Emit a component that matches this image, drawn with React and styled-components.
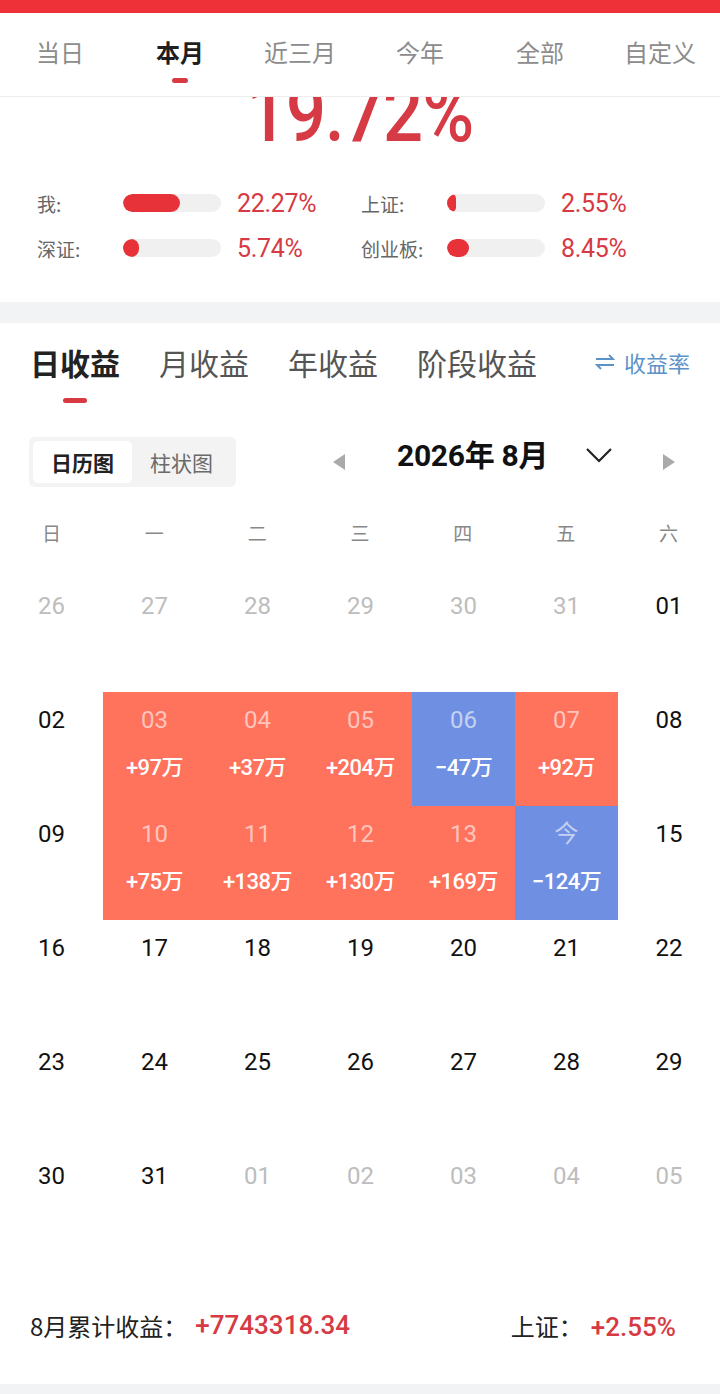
import styled, {createGlobalStyle} from "styled-components";

const colors = {
    red: '#ee3039',
    text: '#d63a44',
    dark: '#1f1f1f',
    grey: '#8a8a8a',
    light: '#bdbdbd',
    cellRed: '#ff725c',
    cellBlue: '#6f90e2',
    band: '#f2f3f5',
    link: '#5b93c9',
}

const GlobalStyle = createGlobalStyle`
  body {
    margin: 0;
    background: #fff;
    font-family: "Noto Sans CJK SC", "Noto Sans", sans-serif;
  }
`

const Page = styled.div`
  width: 720px;
  height: 1394px;
  overflow: hidden;
  background: #fff;
`
const TopBar = styled.div`
  height: 13px;
  background: ${colors.red};
`
const Header = styled.div`
  position: relative;
  z-index: 2;
  display: grid;
  grid-template-columns: repeat(6, 1fr);
  height: 83px;
  background: #fff;
  border-bottom: 1px solid #ececec;
`
const HeaderTab = styled.div`
  display: flex;
  flex-direction: column;
  align-items: center;
  padding-top: 23px;
  font-size: 24px;
  line-height: 32px;
  color: ${p => p.$active ? colors.dark : '#8c8c8c'};
  font-weight: ${p => p.$active ? 700 : 400};
`
const TabLine = styled.div`
  width: ${p => p.$w || 16}px;
  height: 5px;
  border-radius: 3px;
  background: ${p => p.$on ? '#d83a42' : 'transparent'};
  margin-top: ${p => p.$mt || 10}px;
`
const Summary = styled.div`
  height: 205px;
  overflow: hidden;
`
const BigNumber = styled.div`
  margin-top: -34px;
  text-align: center;
  font-family: Roboto, sans-serif;
  font-size: 82px;
  line-height: 100px;
  letter-spacing: -1px;
  color: ${colors.text};
  font-weight: 500;
  transform: scaleX(0.86);
`
const Stats = styled.div`
  display: grid;
  grid-template-columns: 324px 1fr;
  row-gap: 17px;
  padding: 26px 0 0 37px;
`
const Stat = styled.div`
  display: flex;
  align-items: center;
  height: 28px;
`
const StatLabel = styled.div`
  width: 86px;
  font-size: 19px;
  color: #666;
`
const Track = styled.div`
  width: 98px;
  height: 18px;
  border-radius: 9px;
  background: #f0f0f0;
  overflow: hidden;
`
const Fill = styled.div`
  height: 100%;
  border-radius: 9px;
  background: #e8323a;
`
const StatValue = styled.div`
  margin-left: 16px;
  font-family: Roboto, sans-serif;
  font-size: 25px;
  color: ${colors.text};
  letter-spacing: -0.3px;
`
const Band = styled.div`
  height: 21px;
  background: ${colors.band};
`
const ProfitTabs = styled.div`
  display: flex;
  align-items: flex-start;
  padding: 19px 30px 0 30px;
  height: 89px;
  box-sizing: border-box;
`
const ProfitTab = styled.div`
  display: flex;
  flex-direction: column;
  align-items: center;
  margin-right: 39px;
  font-size: 30px;
  line-height: 40px;
  color: ${p => p.$active ? '#222' : '#555'};
  font-weight: ${p => p.$active ? 700 : 400};
`
const RateSwitch = styled.div`
  margin-left: auto;
  display: flex;
  align-items: center;
  gap: 9px;
  font-size: 22px;
  line-height: 40px;
  color: ${colors.link};
`
const Toolbar = styled.div`
  display: flex;
  align-items: center;
  padding: 24px 0 0 29px;
`
const Segmented = styled.div`
  display: flex;
  padding: 4px;
  width: 207px;
  height: 50px;
  box-sizing: border-box;
  background: #f3f3f3;
  border-radius: 6px;
`
const Segment = styled.div`
  width: 99px;
  display: flex;
  align-items: center;
  justify-content: center;
  border-radius: 5px;
  font-size: 21px;
  background: ${p => p.$active ? '#fff' : 'transparent'};
  color: ${p => p.$active ? '#222' : '#6a6a6a'};
  font-weight: ${p => p.$active ? 700 : 400};
`
const MonthNav = styled.div`
  display: flex;
  align-items: center;
  margin-left: 97px;
`
const Triangle = styled.div`
  width: 0;
  height: 0;
  border-top: 8px solid transparent;
  border-bottom: 8px solid transparent;
  ${p => p.$right ? `border-left: 12px solid #aaa;` : `border-right: 12px solid #aaa;`}
`
const MonthTitle = styled.div`
  margin: 0 0 12px 52px;
  font-size: 30px;
  line-height: 40px;
  font-weight: 700;
  color: #111;
  font-family: Roboto, "Noto Sans CJK SC", sans-serif;
  letter-spacing: -0.3px;
`
const Chevron = styled.svg`
  margin: 0 50px 14px 37px;
`
const WeekHead = styled.div`
  display: grid;
  grid-template-columns: repeat(7, 1fr);
  margin-top: 30px;
  height: 60px;
`
const WeekDay = styled.div`
  text-align: center;
  font-size: 19px;
  line-height: 30px;
  color: #888;
`
const Grid = styled.div`
  display: grid;
  grid-template-columns: 103px 103px 103px 103px 103px 103px 102px;
  grid-auto-rows: 114px;
`
const Cell = styled.div`
  display: flex;
  flex-direction: column;
  align-items: center;
  background: ${p => p.$kind === 'up' ? colors.cellRed : p.$kind === 'down' ? colors.cellBlue : 'transparent'};
`
const DayNum = styled.div`
  margin-top: 12px;
  font-family: Roboto, "Noto Sans CJK SC", sans-serif;
  font-size: 24px;
  line-height: 32px;
  color: ${p => p.$kind ? 'rgba(255,255,255,0.6)' : p.$muted ? colors.light : '#111'};
`
const DayValue = styled.div`
  margin-top: 17px;
  font-family: Roboto, "Noto Sans CJK SC", sans-serif;
  font-size: 22px;
  line-height: 30px;
  font-weight: 500;
  color: #fff;
  letter-spacing: -0.5px;
`
const Footer = styled.div`
  display: flex;
  align-items: center;
  height: 122px;
  padding: 4px 44px 0 30px;
  box-sizing: border-box;
  font-size: 24px;
  color: #222;
`
const FooterValue = styled.span`
  font-family: Roboto, sans-serif;
  font-size: 26px;
  font-weight: 500;
  color: ${colors.text};
  margin-left: 8px;
`
const FooterRight = styled.div`
  margin-left: auto;
`

const headerTabs = ['当日', '本月', '近三月', '今年', '全部', '自定义']

const stats = [
    {label: '我:', fill: 57, value: '22.27%'},
    {label: '上证:', fill: 9, value: '2.55%'},
    {label: '深证:', fill: 16, value: '5.74%'},
    {label: '创业板:', fill: 22, value: '8.45%'},
]

const profitTabs = ['日收益', '月收益', '年收益', '阶段收益']

const weekDays = ['日', '一', '二', '三', '四', '五', '六']

const days = [
    {d: '26', muted: true}, {d: '27', muted: true}, {d: '28', muted: true}, {d: '29', muted: true},
    {d: '30', muted: true}, {d: '31', muted: true}, {d: '01'},
    {d: '02'}, {d: '03', kind: 'up', v: '+97万'}, {d: '04', kind: 'up', v: '+37万'},
    {d: '05', kind: 'up', v: '+204万'}, {d: '06', kind: 'down', v: '−47万'}, {d: '07', kind: 'up', v: '+92万'}, {d: '08'},
    {d: '09'}, {d: '10', kind: 'up', v: '+75万'}, {d: '11', kind: 'up', v: '+138万'},
    {d: '12', kind: 'up', v: '+130万'}, {d: '13', kind: 'up', v: '+169万'}, {d: '今', kind: 'down', v: '−124万'}, {d: '15'},
    {d: '16'}, {d: '17'}, {d: '18'}, {d: '19'}, {d: '20'}, {d: '21'}, {d: '22'},
    {d: '23'}, {d: '24'}, {d: '25'}, {d: '26'}, {d: '27'}, {d: '28'}, {d: '29'},
    {d: '30'}, {d: '31'}, {d: '01', muted: true}, {d: '02', muted: true}, {d: '03', muted: true},
    {d: '04', muted: true}, {d: '05', muted: true},
]

const App = () => {
    return (
        <Page>
            <GlobalStyle/>
            <TopBar/>
            <Header>
                {headerTabs.map((t, i) => (
                    <HeaderTab key={t} $active={i === 1}>
                        {t}
                        <TabLine $on={i === 1}/>
                    </HeaderTab>
                ))}
            </Header>
            <Summary>
                <BigNumber>19.72%</BigNumber>
                <Stats>
                    {stats.map(s => (
                        <Stat key={s.label}>
                            <StatLabel>{s.label}</StatLabel>
                            <Track>
                                <Fill style={{width: s.fill}}/>
                            </Track>
                            <StatValue>{s.value}</StatValue>
                        </Stat>
                    ))}
                </Stats>
            </Summary>
            <Band/>
            <ProfitTabs>
                {profitTabs.map((t, i) => (
                    <ProfitTab key={t} $active={i === 0}>
                        {t}
                        <TabLine $on={i === 0} $w={24} $mt={16}/>
                    </ProfitTab>
                ))}
                <RateSwitch>
                    <svg width="20" height="16" viewBox="0 0 20 16" fill="none" stroke={colors.link} strokeWidth="1.8">
                        <path d="M1 5h17l-4-4"/>
                        <path d="M19 11H2l4 4"/>
                    </svg>
                    收益率
                </RateSwitch>
            </ProfitTabs>
            <Toolbar>
                <Segmented>
                    <Segment $active>日历图</Segment>
                    <Segment>柱状图</Segment>
                </Segmented>
                <MonthNav>
                    <Triangle/>
                    <MonthTitle>2026年 8月</MonthTitle>
                    <Chevron width="28" height="16" viewBox="0 0 28 16" fill="none" stroke="#222" strokeWidth="2.2">
                        <path d="M2 2l12 12L26 2"/>
                    </Chevron>
                    <Triangle $right/>
                </MonthNav>
            </Toolbar>
            <WeekHead>
                {weekDays.map(w => <WeekDay key={w}>{w}</WeekDay>)}
            </WeekHead>
            <Grid>
                {days.map((c, i) => (
                    <Cell key={i} $kind={c.kind}>
                        <DayNum $kind={c.kind} $muted={c.muted}>{c.d}</DayNum>
                        {c.v && <DayValue>{c.v}</DayValue>}
                    </Cell>
                ))}
            </Grid>
            <Footer>
                8月累计收益：
                <FooterValue>+7743318.34</FooterValue>
                <FooterRight>
                    上证：
                    <FooterValue>+2.55%</FooterValue>
                </FooterRight>
            </Footer>
            <Band/>
        </Page>
    )
}

export default App
